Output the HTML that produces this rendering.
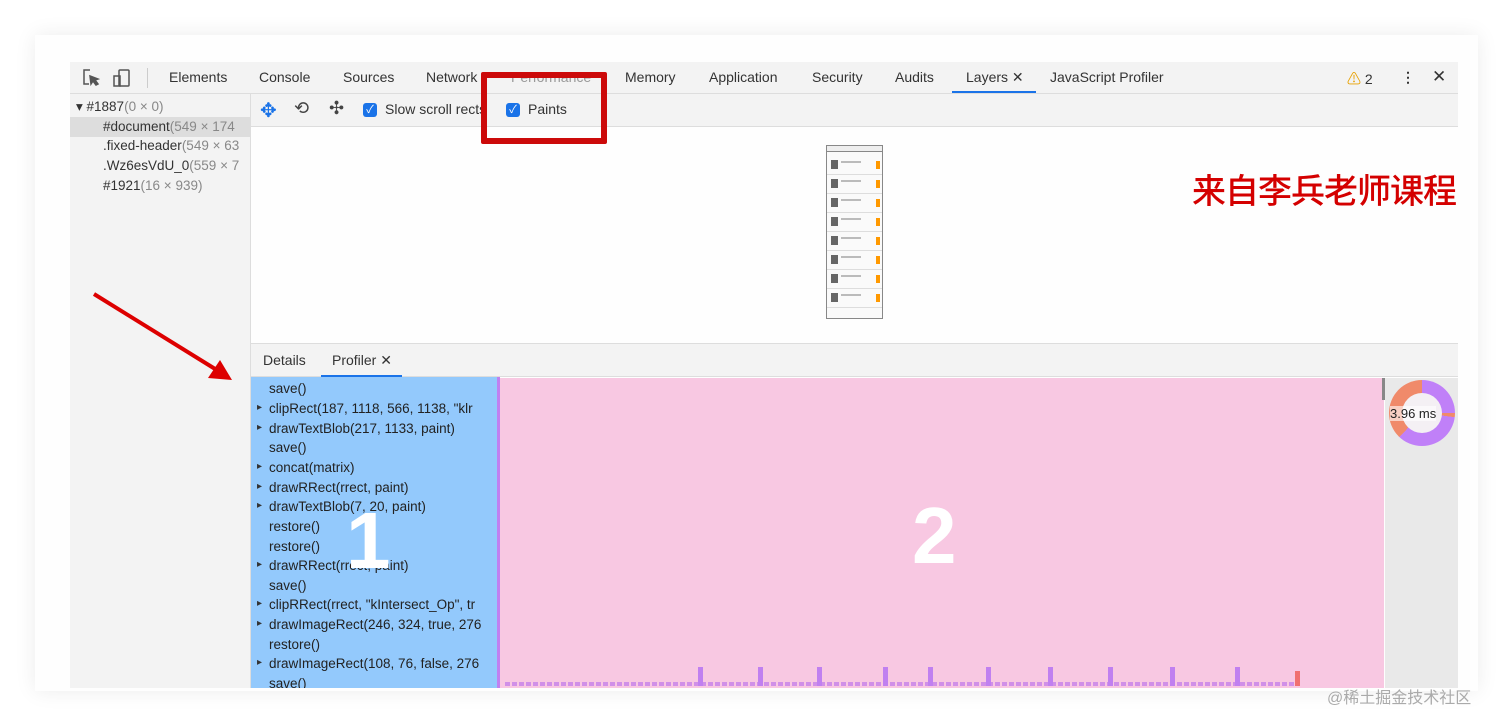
<!DOCTYPE html>
<html><head><meta charset="utf-8"><style>
*{margin:0;padding:0;box-sizing:border-box}
body{width:1512px;height:725px;background:#fff;position:relative;overflow:hidden;font-family:"Liberation Sans","Noto Sans CJK SC",sans-serif;font-size:14px;color:#333}
.a{position:absolute}
.card{left:35px;top:35px;width:1443px;height:656px;background:#fefefe;box-shadow:0 0 20px rgba(0,0,0,.08)}
.tabs{left:70px;top:62px;width:1388px;height:32px;background:#f3f3f3;border-bottom:1px solid #ddd}
.tab{position:absolute;top:7px;font-size:14px;color:#333}
.side{left:70px;top:94px;width:181px;height:594px;background:#f3f3f3;border-right:1px solid #ddd;font-size:13.5px}
.side div{position:absolute;left:0;white-space:nowrap;overflow:hidden;width:180px}
.g{color:#888}
.tb{left:251px;top:94px;width:1207px;height:33px;background:#f3f3f3;border-bottom:1px solid #ddd}
.cb{position:absolute;width:14px;height:14px;background:#1a73e8;border-radius:3px;color:#fff;font-size:11px;line-height:14px;text-align:center}
.bt{left:251px;top:343px;width:1207px;height:34px;background:#f3f3f3;border-top:1px solid #ddd;border-bottom:1px solid #ddd}
.list{left:251px;top:377px;width:246px;height:311px;background:#93c9fc;overflow:hidden;font-size:13.5px;color:#222}
.list div{position:absolute;left:18px;white-space:nowrap}
.list div.t:before{content:"▸";position:absolute;left:-12px;font-size:10px;color:#333;top:1px}
.pink{left:500px;top:378px;width:884px;height:310px;background:#f8c8e2}
.rp{left:1385px;top:378px;width:73px;height:310px;background:#e9e9e9}
.row{height:19px;border-bottom:1px solid #ddd;position:relative}
.row i{position:absolute;left:4px;top:4px;width:7px;height:9px;background:#666}
.row b{position:absolute;left:14px;top:5px;width:20px;height:2px;background:#bbb}
.row u{position:absolute;right:2px;top:5px;width:4px;height:8px;background:#f90}
</style></head><body>
<div class="a card"></div>
<div class="a tabs">
<svg class="a" style="left:12px;top:7px" width="18" height="18" viewBox="0 0 18 18" fill="none" stroke="#555" stroke-width="1.5"><path d="M8 1H2v14h5"/><path d="M8 7l8 3-3 1 3 4-2 1-3-4-2 3z" fill="#555"/></svg>
<svg class="a" style="left:42px;top:6px" width="20" height="20" viewBox="0 0 20 20" fill="none" stroke="#555" stroke-width="1.5"><rect x="7" y="2" width="10" height="16" rx="1"/><rect x="2" y="8" width="6" height="10"/></svg>
<div class="a" style="left:77px;top:6px;width:1px;height:20px;background:#ccc"></div>
<span class="tab" style="left:99px">Elements</span>
<span class="tab" style="left:189px">Console</span>
<span class="tab" style="left:273px">Sources</span>
<span class="tab" style="left:356px">Network</span>
<span class="tab" style="left:441px;color:#999">Performance</span>
<span class="tab" style="left:555px">Memory</span>
<span class="tab" style="left:639px">Application</span>
<span class="tab" style="left:742px">Security</span>
<span class="tab" style="left:825px">Audits</span>
<span class="tab" style="left:896px">Layers ✕</span>
<div class="a" style="left:882px;top:29px;width:84px;height:2px;background:#1a73e8"></div>
<span class="tab" style="left:980px">JavaScript Profiler</span>
<span class="tab" style="left:1277px"><span style="color:#e8a100">⚠</span> 2</span>
<span class="tab" style="left:1331px;font-weight:bold">⋮</span>
<span class="tab" style="left:1362px;font-size:17px;top:5px">✕</span>
</div>
<div class="a side">
<div style="top:5px;left:6px">▾ #1887<span class="g">(0 × 0)</span></div>
<div style="top:23px;height:20px;background:#ddd;padding-left:33px;padding-top:2px">#document<span class="g">(549 × 174</span></div>
<div style="top:44px;left:33px">.fixed-header<span class="g">(549 × 63</span></div>
<div style="top:64px;left:33px">.Wz6esVdU_0<span class="g">(559 × 7</span></div>
<div style="top:84px;left:33px">#1921<span class="g">(16 × 939)</span></div>
</div>
<div class="a tb">
<span class="a" style="left:9px;top:4px;color:#1a73e8;font-size:20px">✥</span>
<span class="a" style="left:43px;top:4px;color:#444;font-size:18px">⟲</span>
<span class="a" style="left:78px;top:4px;color:#444;font-size:18px">✣</span>
<div class="cb" style="left:112px;top:9px">✓</div>
<span class="a" style="left:134px;top:7px">Slow scroll rects</span>
<div class="cb" style="left:255px;top:9px">✓</div>
<span class="a" style="left:277px;top:7px">Paints</span>
</div>
<div class="a" style="left:481px;top:72px;width:126px;height:72px;border:6px solid #cc0a0a;border-radius:2px"></div>
<div class="a" style="left:826px;top:145px;width:57px;height:174px;border:1px solid #888;background:#fafafa">
<div style="height:6px;border-bottom:1px solid #888;background:#eee"></div>
<div style="padding-top:4px">
<div class="row"><i></i><b></b><u></u></div><div class="row"><i></i><b></b><u></u></div><div class="row"><i></i><b></b><u></u></div><div class="row"><i></i><b></b><u></u></div><div class="row"><i></i><b></b><u></u></div><div class="row"><i></i><b></b><u></u></div><div class="row"><i></i><b></b><u></u></div><div class="row"><i></i><b></b><u></u></div>
</div>
</div>
<div class="a" style="left:1192px;top:164px;font-size:34px;color:#d40000;font-family:'Noto Sans CJK SC',sans-serif;font-weight:500;letter-spacing:-1px">来自李兵老师课程</div>
<svg class="a" style="left:90px;top:290px" width="150" height="100"><line x1="4" y1="4" x2="130" y2="82" stroke="#d00" stroke-width="4"/><polygon points="142,90 118,88 130,70" fill="#d00"/></svg>
<div class="a bt">
<span class="a" style="left:12px;top:8px">Details</span>
<span class="a" style="left:81px;top:8px">Profiler ✕</span>
<div class="a" style="left:70px;top:31px;width:81px;height:2px;background:#1a73e8"></div>
</div>
<div class="a list">
<div style="top:4px">save()</div>
<div class="t" style="top:24px">clipRect(187, 1118, 566, 1138, "klr</div>
<div class="t" style="top:44px">drawTextBlob(217, 1133, paint)</div>
<div style="top:63px">save()</div>
<div class="t" style="top:83px">concat(matrix)</div>
<div class="t" style="top:103px">drawRRect(rrect, paint)</div>
<div class="t" style="top:122px">drawTextBlob(7, 20, paint)</div>
<div style="top:142px">restore()</div>
<div style="top:162px">restore()</div>
<div class="t" style="top:181px">drawRRect(rrect, paint)</div>
<div style="top:201px">save()</div>
<div class="t" style="top:220px">clipRRect(rrect, "kIntersect_Op", tr</div>
<div class="t" style="top:240px">drawImageRect(246, 324, true, 276</div>
<div style="top:260px">restore()</div>
<div class="t" style="top:279px">drawImageRect(108, 76, false, 276</div>
<div style="top:299px">save()</div>
<span class="a" style="left:95px;top:118px;font-size:80px;color:#fff;font-weight:bold">1</span>
</div>
<div class="a" style="left:497px;top:377px;width:3px;height:311px;background:#c080f0"></div>
<div class="a pink"><span class="a" style="left:412px;top:112px;font-size:80px;color:#fff;font-weight:bold">2</span>
<div class="a" style="left:5px;bottom:2px;width:795px;height:4px;background:repeating-linear-gradient(90deg,#d090e8 0 5px,#f8c8e2 5px 7px)"></div>
<div class="a" style="left:198px;bottom:2px;width:5px;height:19px;background:#c080f0"></div>
<div class="a" style="left:258px;bottom:2px;width:5px;height:19px;background:#c080f0"></div>
<div class="a" style="left:317px;bottom:2px;width:5px;height:19px;background:#c080f0"></div>
<div class="a" style="left:383px;bottom:2px;width:5px;height:19px;background:#c080f0"></div>
<div class="a" style="left:428px;bottom:2px;width:5px;height:19px;background:#c080f0"></div>
<div class="a" style="left:486px;bottom:2px;width:5px;height:19px;background:#c080f0"></div>
<div class="a" style="left:548px;bottom:2px;width:5px;height:19px;background:#c080f0"></div>
<div class="a" style="left:608px;bottom:2px;width:5px;height:19px;background:#c080f0"></div>
<div class="a" style="left:670px;bottom:2px;width:5px;height:19px;background:#c080f0"></div>
<div class="a" style="left:735px;bottom:2px;width:5px;height:19px;background:#c080f0"></div>
<div class="a" style="left:795px;bottom:2px;width:5px;height:15px;background:#f07070"></div>
<div class="a" style="left:882px;top:0;width:4px;height:22px;background:#888"></div>
</div>
<div class="a rp">
<div class="a" style="left:4px;top:2px;width:66px;height:66px;border-radius:50%;background:conic-gradient(#c080f8 0 25%,#f08a6a 25% 27%,#c080f8 27% 62%,#f08a6a 62% 100%)"></div>
<div class="a" style="left:17px;top:15px;width:40px;height:40px;border-radius:50%;background:#f4f0f4"></div>
<span class="a" style="left:5px;top:28px;font-size:13px;color:#222;background:rgba(255,255,255,.6)">3.96 ms</span>
</div>
<div class="a" style="left:1327px;top:684px;font-size:16px;color:#aaa">@稀土掘金技术社区</div>
</body></html>
